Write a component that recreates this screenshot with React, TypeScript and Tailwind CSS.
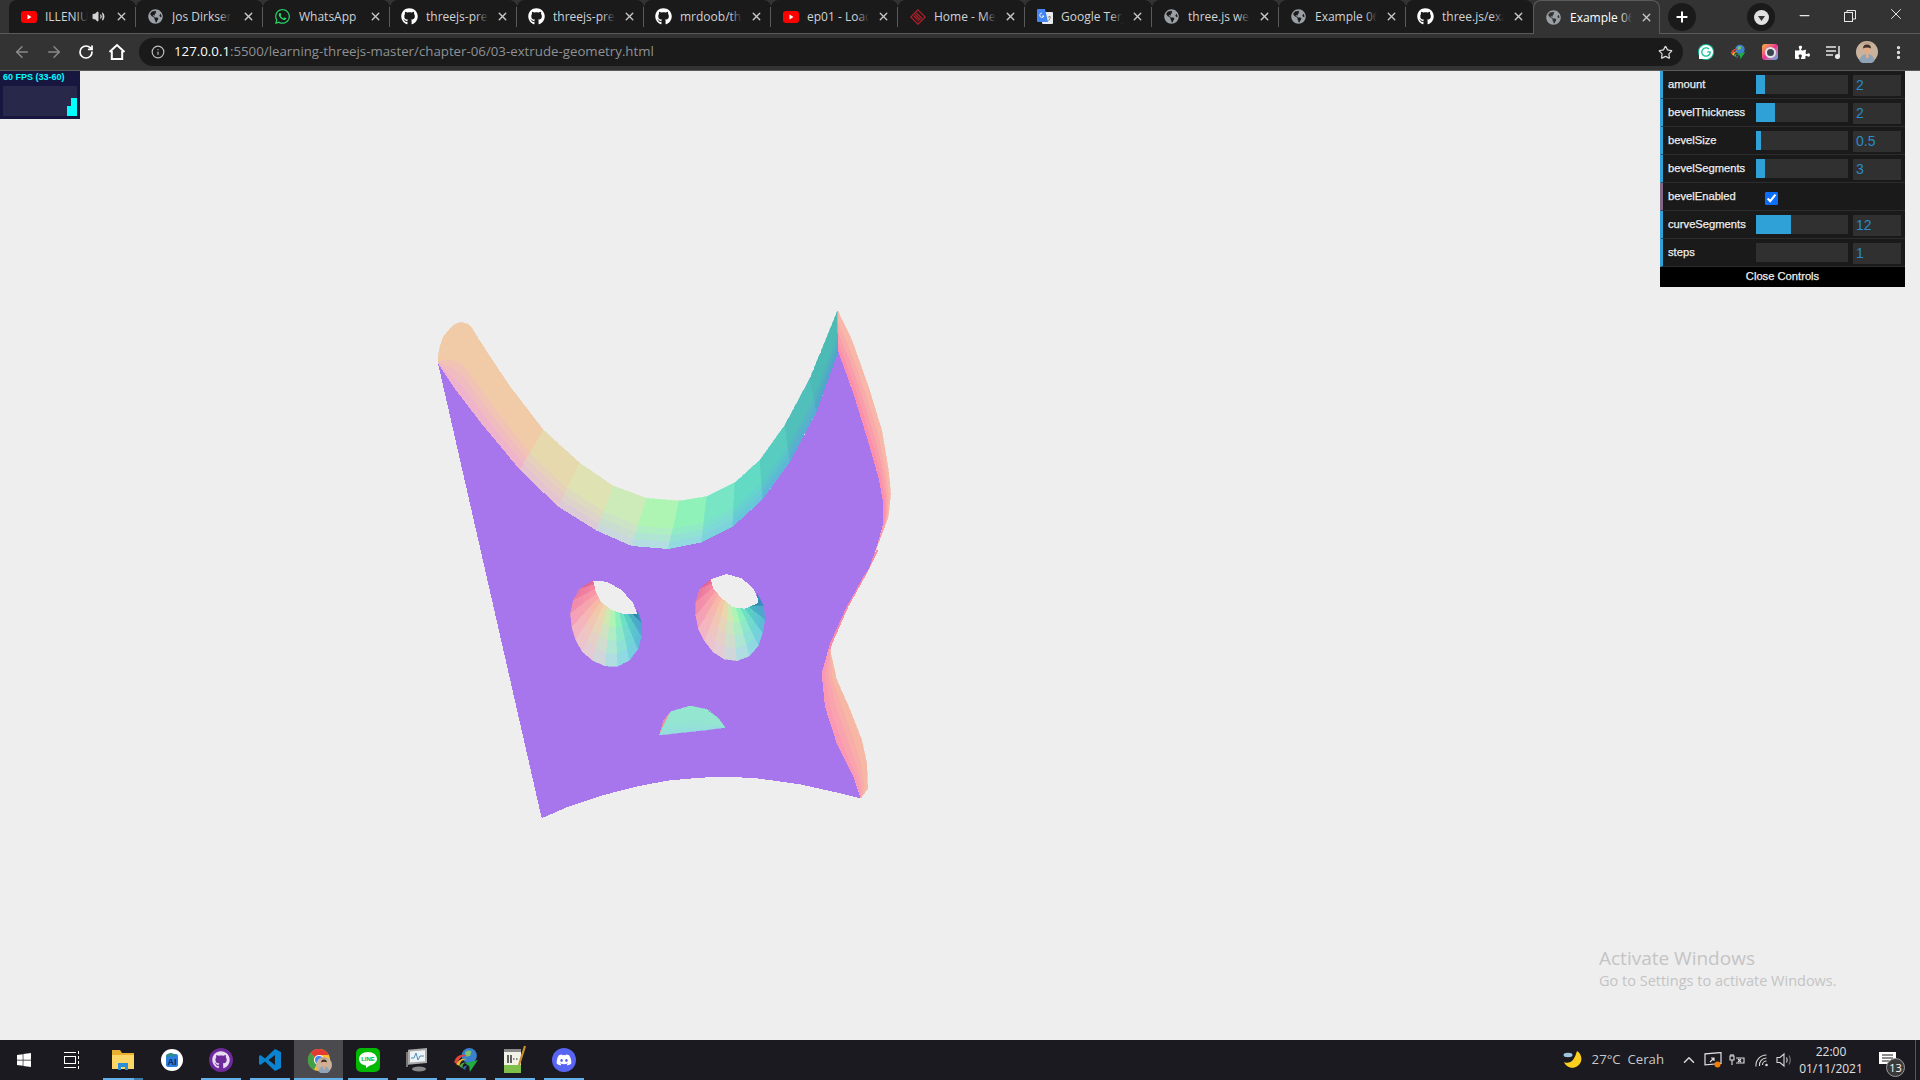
import React from 'react';
import { ArrowLeft, ArrowRight, RotateCw, Star, X, Plus, Minus, Volume2, Info, MoreVertical, ChevronUp } from 'lucide-react';
import { FaGithub, FaWhatsapp, FaGlobeAmericas, FaWindows, FaDiscord, FaPuzzlePiece } from 'react-icons/fa';
import { SiGrammarly } from 'react-icons/si';

type Pt = [number, number];

const uiFont = "font-['Open_Sans','Noto_Sans',sans-serif]";

/* ---------- small drawn icons ---------- */

const YouTubeIcon = () => (
  <svg width="16" height="16" viewBox="0 0 16 16">
    <rect x="0" y="2" width="16" height="12" rx="3" fill="#f00" />
    <path d="M6.5 5.5 L10.5 8 L6.5 10.5 Z" fill="#fff" />
  </svg>
);

const MeetIcon = () => (
  <svg width="16" height="16" viewBox="0 0 16 16" fill="none" stroke="#b3202a" strokeWidth="1.2">
    <path d="M8 0.8 L15.2 8 L8 15.2 L0.8 8 Z" />
    <path d="M5 5.5 L10.5 11 M6.5 4 L12 9.5 M3.8 7 L9 12.2" />
  </svg>
);

const TranslateIcon = () => (
  <svg width="16" height="16" viewBox="0 0 16 16">
    <rect x="5" y="3" width="11" height="12" rx="1" fill="#e8eaed" />
    <path d="M1 0 H8 L11 13 H1 a1 1 0 0 1 -1 -1 V1 a1 1 0 0 1 1 -1Z" fill="#4285f4" />
    <path d="M5 4 a2.2 2.2 0 1 0 2 3 H5" fill="none" stroke="#fff" strokeWidth="0.9" />
    <path d="M11 8 h3 M12.5 7 v1 M11.5 12 L13.5 8.5" fill="none" stroke="#777" strokeWidth="0.8" />
  </svg>
);

const HomeIcon = () => (
  <svg width="18" height="18" viewBox="0 0 18 18" fill="none" stroke="#fff" strokeWidth="2">
    <path d="M1.5 9 L9 2 L16.5 9" />
    <path d="M3.8 8 V16 H14.2 V8" />
  </svg>
);

const Globe = () => <FaGlobeAmericas size={15} color="#9aa0a6" />;
const Git = () => <FaGithub size={17} color="#fff" />;
const Whats = () => <FaWhatsapp size={17} color="#25d366" />;

const Avatar = ({ size }: { size: number }) => (
  <svg width={size} height={size} viewBox="0 0 22 22">
    <circle cx="11" cy="11" r="11" fill="#c9b39c" />
    <path d="M5 3 q6 -3 12 0 q-6 -1 -12 0Z" fill="#b89078" />
    <circle cx="11" cy="8.5" r="3.800" fill="#e0ad8a" />
    <path d="M7 7.500 a4 4 0 0 1 8 0 q-4 -2 -8 0Z" fill="#3f3028" />
    <path d="M3.500 20 q1 -7 7.500 -7 q6.500 0 7.500 7 a11 11 0 0 1 -15 0Z" fill="#8fa3b8" />
    <path d="M10 13 h2.500 v4 h-2.500Z" fill="#e0ad8a" />
  </svg>
);

const IdmGlobe = ({ size }: { size: number }) => (
  <svg width={size} height={size} viewBox="0 0 24 24">
    <circle cx="15" cy="8" r="7" fill="#3a7fd0" />
    <path d="M11 5 q3 -3 6 -1 l-1 4 -4 1Z" fill="#7cc46a" />
    <path d="M1 14 q3 -9 12 -6 q-8 0 -9 8Z" fill="#e0463a" />
    <path d="M3 16 q2 -6 10 -5 q-7 1 -7 6.500Z" fill="#f0b030" />
    <path d="M6 18 q1 -4 7 -4 q-5 1 -4 5.500Z" fill="#4aa84a" />
    <path d="M9 20 q1 -3 5 -3 q-3 1 -2.500 4Z" fill="#3a6fc0" />
    <path d="M23 12 L11 15 L15 17.500 L15.500 23 Z" fill="#1fae3f" />
  </svg>
);

const ChromeIcon = () => (
  <svg width="24" height="24" viewBox="0 0 24 24">
    <circle cx="12" cy="12" r="11" fill="#fbc02d" />
    <path d="M12 1 A11 11 0 0 1 21.800 7 H12 A5 5 0 0 0 7.600 9.500 L3.500 4.800 A11 11 0 0 1 12 1Z" fill="#e53935" />
    <path d="M3.500 4.800 L7.600 9.500 A5 5 0 0 0 9.500 16.300 L7 22 A11 11 0 0 1 3.500 4.800Z" fill="#43a047" />
    <circle cx="12" cy="12" r="5" fill="#fff" />
    <circle cx="12" cy="12" r="4" fill="#4285f4" />
  </svg>
);

const FolderIcon = () => (
  <svg width="24" height="24" viewBox="0 0 24 24">
    <path d="M1 2 H9 L11 5 H23 V21 H1 Z" fill="#e8b030" />
    <rect x="1" y="7" width="22" height="14" fill="#fcd768" />
    <path d="M7 15 H17 V22 H14 V19 H10 V22 H7Z" fill="#2a8fd8" />
  </svg>
);

const AiIcon = () => (
  <svg width="22" height="22" viewBox="0 0 22 22">
    <circle cx="11" cy="11" r="11" fill="#fff" />
    <rect x="5" y="5" width="12" height="13" rx="2" fill="#2b7de0" />
    <path d="M5 8 Q6 4 10 4 Q13 4 14 7Z" fill="#2e8f7f" />
    <text x="11" y="16" textAnchor="middle" fontSize="9" fontWeight="700" fontFamily="Liberation Sans" fill="#12245c">AI</text>
  </svg>
);

const VsCodeIcon = () => (
  <svg width="24" height="24" viewBox="0 0 24 24">
    <path d="M17 1 L23 4 V20 L17 23 L7 13.500 L2.500 17 L1 16 V8 L2.500 7 L7 10.500Z M17 7 L10.500 12 L17 17Z" fill="#0a84d0" fillRule="evenodd" />
  </svg>
);

const LineIcon = () => (
  <svg width="24" height="24" viewBox="0 0 24 24">
    <rect width="24" height="24" rx="5" fill="#00b900" />
    <path d="M12 4 C6.500 4 3 7.300 3 11 C3 14.500 6 17 10 17.500 L10 20 L14 17.500 C18 16.500 21 14 21 11 C21 7.300 17.500 4 12 4Z" fill="#fff" />
    <text x="12" y="13" textAnchor="middle" fontSize="6" fontWeight="700" fontFamily="Liberation Sans" fill="#00b900">LINE</text>
  </svg>
);

const NetworkIcon = () => (
  <svg width="24" height="26" viewBox="0 0 24 26">
    <rect x="3" y="3" width="19" height="15" fill="#aaa" transform="skewY(-5)" />
    <rect x="5" y="5" width="15" height="11" fill="#eef2f5" transform="skewY(-5)" />
    <path d="M6 11 L9 11 L11 6 L13 13 L15 9 L19 9" fill="none" stroke="#4a90c0" />
    <ellipse cx="14" cy="22" rx="7" ry="2.500" fill="#888" />
    <rect x="1" y="5" width="2" height="15" fill="#777" />
  </svg>
);

const NotepadIcon = () => (
  <svg width="24" height="30" viewBox="0 0 24 30">
    <rect x="1" y="4" width="17" height="24" fill="#f2f2e8" />
    <rect x="1" y="20" width="17" height="8" fill="#7fc04c" />
    <rect x="1" y="4" width="17" height="3" fill="#8a8a8a" />
    <path d="M5 10 V18 M8 10 V18" stroke="#222" strokeWidth="1.400" />
    <path d="M10 14 h1.500 M13 14 h1.500" stroke="#222" strokeWidth="1" />
    <path d="M22 1 L16 20" stroke="#c8902a" strokeWidth="2.200" />
  </svg>
);

const MoonIcon = () => (
  <svg width="20" height="20" viewBox="0 0 20 20">
    <path d="M14 1 A9 9 0 1 1 1 12 Q10 16 14 1Z" fill="#fccf1e" />
    <ellipse cx="5" cy="5" rx="4.500" ry="2.200" fill="#9fc4e0" />
  </svg>
);

/* ---------- tab strip ---------- */

interface Tab {
  title: string;
  icon: React.ReactNode;
  textWidth: number;
  sound?: boolean;
  active?: boolean;
}

const tabs: Tab[] = [
  { title: 'ILLENIUM', icon: <YouTubeIcon />, textWidth: 43, sound: true },
  { title: 'Jos Dirksen', icon: <Globe />, textWidth: 59 },
  { title: 'WhatsApp', icon: <Whats />, textWidth: 67 },
  { title: 'threejs-presentation', icon: <Git />, textWidth: 62 },
  { title: 'threejs-presentation', icon: <Git />, textWidth: 62 },
  { title: 'mrdoob/three.js', icon: <Git />, textWidth: 62 },
  { title: 'ep01 - Loading', icon: <YouTubeIcon />, textWidth: 62 },
  { title: 'Home - Meetup', icon: <MeetIcon />, textWidth: 62 },
  { title: 'Google Terjemahan', icon: <TranslateIcon />, textWidth: 62 },
  { title: 'three.js webgl', icon: <Globe />, textWidth: 62 },
  { title: 'Example 06.03', icon: <Globe />, textWidth: 62 },
  { title: 'three.js/examples', icon: <Git />, textWidth: 62 },
  { title: 'Example 06.03', icon: <Globe />, textWidth: 62, active: true },
];

const TabItem = ({ tab, last }: { tab: Tab; last: boolean }) => (
  <div
    className={`relative flex items-center w-[127px] shrink-0 pl-[11px] rounded-t-lg ${
      tab.active ? 'bg-[#333333] h-[34px] border border-b-0 border-[#5b5b5b] z-10' : 'bg-[#1a1a1a] h-[33px]'
    }`}
  >
    <span className="flex items-center justify-center w-[17px] shrink-0">{tab.icon}</span>
    <div className="ml-[8px] overflow-hidden relative" style={{ width: tab.textWidth }}>
      <span className={`block whitespace-nowrap text-[12px] ${tab.active ? 'text-[#ffffff]' : 'text-[#d0d3d6]'}`}>{tab.title}</span>
      <span className={`absolute right-0 top-0 h-full w-3 bg-gradient-to-r from-transparent ${tab.active ? 'to-[#333333]' : 'to-[#1a1a1a]'}`} />
    </div>
    {tab.sound && <Volume2 size={13} className="absolute left-[83px] text-[#d5d5d5] fill-[#d5d5d5]" />}
    <X size={13} strokeWidth={2.5} className="absolute left-[106px] text-[#c8c8c8]" />
    {!tab.active && !last && <span className="absolute right-0 top-[7px] h-[20px] w-px bg-[#5a5a5a]" />}
  </div>
);

const TabStrip = () => (
  <div className="flex h-[34px] bg-[#333333] border-b border-[#5b5b5b] pl-[9px] shrink-0 relative">
    {tabs.map((tab, i) => (
      <TabItem key={i} tab={tab} last={i === 11} />
    ))}
    <div className="ml-[8px] mt-[3px] w-[28px] h-[28px] rounded-full bg-[#1a1a1a] flex items-center justify-center">
      <Plus size={16} strokeWidth={3} className="text-white" />
    </div>
    <div className="ml-[51px] mt-[3px] w-[28px] h-[28px] rounded-full bg-[#1a1a1a] flex items-center justify-center">
      <svg width="15" height="15" viewBox="0 0 15 15">
        <circle cx="7.500" cy="7.500" r="7.500" fill="#e0e0e0" />
        <path d="M4 6 H11 L7.500 11Z" fill="#333" />
      </svg>
    </div>
    <Minus size={15} className="ml-[22px] mt-[8px] text-[#e8e8e8]" />
    <svg width="12" height="12" viewBox="0 0 12 12" fill="none" stroke="#e8e8e8" className="ml-[32px] mt-[10px]">
      <rect x="0.5" y="2.500" width="8" height="9" />
      <path d="M3 2.500 V0.500 H11.500 V9 H8.500" />
    </svg>
    <X size={18} strokeWidth={1.3} className="ml-[31px] mt-[5px] text-[#e8e8e8]" />
  </div>
);

/* ---------- toolbar ---------- */

const Toolbar = () => (
  <div className="flex items-center h-[37px] bg-[#333333] border-b border-[#5b5b5b] shrink-0">
    <ArrowLeft size={18} className="ml-[13px] text-[#8a8a8a]" />
    <ArrowRight size={18} className="ml-[14px] text-[#8a8a8a]" />
    <RotateCw size={16} strokeWidth={2.6} className="ml-[15px] text-white" />
    <span className="ml-[14px] flex"><HomeIcon /></span>
    <div className="ml-[13px] w-[1544px] h-[28px] rounded-full bg-[#1a1a1a] flex items-center relative">
      <Info size={14} className="ml-[12px] text-[#c0c0c0]" />
      <div className={`ml-[9px] text-[13.27px] whitespace-nowrap ${uiFont}`}>
        <span className="text-white">127.0.0.1</span>
        <span className="text-[#8f9194]">:5500/learning-threejs-master/chapter-06/03-extrude-geometry.html</span>
      </div>
      <Star size={15} strokeWidth={2} className="absolute right-[10px] text-[#d8d8d8]" />
    </div>
    <span className="ml-[15px] w-[16px] h-[16px] rounded-full bg-[#15c39a] flex items-center justify-center">
      <SiGrammarly size={14} color="#fff" />
    </span>
    <span className="ml-[16px] flex"><IdmGlobe size={16} /></span>
    <span className="ml-[16px] w-[16px] h-[16px] rounded-[3px] bg-gradient-to-br from-[#f5b013] via-[#e8308c] to-[#20a8e8] flex items-center justify-center">
      <span className="w-[11px] h-[11px] rounded-full border-2 border-[#dfe6ea] bg-[#3d4650]" />
    </span>
    <FaPuzzlePiece size={15} color="#fff" className="ml-[17px]" />
    <svg width="16" height="14" viewBox="0 0 16 14" fill="none" stroke="#e8e8e8" strokeWidth="1.500" className="ml-[16px]">
      <path d="M0 2 H10 M0 6 H10 M0 10 H7 M13 1 V11" />
      <circle cx="11.500" cy="11.500" r="1.800" fill="#e8e8e8" />
    </svg>
    <span className="ml-[14px] flex"><Avatar size={22} /></span>
    <MoreVertical size={17} strokeWidth={2.6} className="ml-[12px] text-[#e8e8e8]" />
  </div>
);

/* ---------- three.js stats + dat.gui overlays ---------- */

const Stats = () => (
  <div className="absolute left-0 top-0 w-[80px] h-[48px] bg-[#16163f] px-[3px] font-['Liberation_Sans',sans-serif]">
    <div className="h-[15px] text-[9px] font-bold leading-[13px] text-[#00ffff] whitespace-nowrap">60 FPS (33-60)</div>
    <div className="w-[74px] h-[30px] bg-[#28284a] flex items-end justify-end">
      <span className="w-[4px] h-[10px] bg-[#00ffff]" />
      <span className="w-[6px] h-[18px] bg-[#00ffff]" />
    </div>
  </div>
);

interface Control {
  label: string;
  value?: string;
  fill?: number;
}

const controls: Control[] = [
  { label: 'amount', value: '2', fill: 9 },
  { label: 'bevelThickness', value: '2', fill: 19 },
  { label: 'bevelSize', value: '0.5', fill: 5 },
  { label: 'bevelSegments', value: '3', fill: 9 },
  { label: 'bevelEnabled' },
  { label: 'curveSegments', value: '12', fill: 35 },
  { label: 'steps', value: '1', fill: 0 },
];

const ControlRow = ({ c }: { c: Control }) => (
  <div
    className={`flex items-start h-[28px] pt-[4px] pl-[5px] bg-[#1a1a1a] border-b border-[#2c2c2c] border-l-[3px] ${
      c.value ? 'border-l-[#2fa1d6]' : 'border-l-[#806787]'
    }`}
  >
    <span className="w-[88px] text-[11.2px] leading-[18px] text-[#eeeeee] [-webkit-text-stroke:0.25px_#eeeeee] [text-shadow:0_-1px_0_#111]">{c.label}</span>
    {c.value ? (
      <>
        <div className="w-[92px] h-[19px] bg-[#303030]">
          <div className="h-full bg-[#2fa1d6]" style={{ width: c.fill }} />
        </div>
        <div className="ml-[5px] w-[48px] h-[21px] bg-[#303030] pl-[3px] text-[14px] leading-[20px] text-[#2a8cc8]">{c.value}</div>
      </>
    ) : (
      <input type="checkbox" checked readOnly className="ml-[9px] mt-[5px] w-[13px] h-[13px] accent-[#0b6dfb]" />
    )}
  </div>
);

const Controls = () => (
  <div className="absolute right-[15px] top-0 w-[245px] font-['Liberation_Sans',sans-serif]">
    {controls.map((c) => (
      <ControlRow key={c.label} c={c} />
    ))}
    <div className="h-[20px] bg-black text-center text-[11.2px] leading-[19px] text-[#eeeeee] [-webkit-text-stroke:0.25px_#eeeeee]">Close Controls</div>
  </div>
);

/* ---------- the extruded shape ---------- */

// coordinates below were read off the crops, z5 and z6 bring them to page pixels
const z5 = (p: Pt): Pt => [p[0] / 3 + 420, p[1] / 3 + 290];
const z6 = (p: Pt): Pt => [p[0] / 3 + 500, p[1] / 3 + 550];

const resample = (pts: Pt[], n: number): Pt[] => {
  const lens = [0];
  for (let i = 1; i < pts.length; i++) {
    lens.push(lens[i - 1] + Math.hypot(pts[i][0] - pts[i - 1][0], pts[i][1] - pts[i - 1][1]));
  }
  const total = lens[lens.length - 1];
  const out: Pt[] = [];
  for (let k = 0; k <= n; k++) {
    const d = (total * k) / n;
    let i = 1;
    while (i < pts.length - 1 && lens[i] < d) i++;
    const t = (d - lens[i - 1]) / (lens[i] - lens[i - 1] || 1);
    out.push([pts[i - 1][0] + (pts[i][0] - pts[i - 1][0]) * t, pts[i - 1][1] + (pts[i][1] - pts[i - 1][1]) * t]);
  }
  return out;
};

const mixHex = (a: string, b: string, t: number) => {
  const ch = (h: string, i: number) => parseInt(h.slice(1 + i * 2, 3 + i * 2), 16);
  const c = [0, 1, 2].map((i) => Math.round(ch(a, i) + (ch(b, i) - ch(a, i)) * t));
  return `rgb(${c[0]},${c[1]},${c[2]})`;
};

const toPoints = (pts: Pt[]) => pts.map((p) => `${p[0].toFixed(1)},${p[1].toFixed(1)}`).join(' ');

const BAND_STOPS = [0, 0.58, 0.72, 0.86, 1];
const EYE_STOPS = [0, 0.3, 0.55, 0.78, 1];
const SIDE_STOPS = [0, 0.3, 0.55, 0.8, 1];

// one facet of the bevel: a few strips that go from the colour of edge o to the colour of edge i
const Ribbon = ({ o, i, a, b, stops = BAND_STOPS }: { o: Pt[]; i: Pt[]; a: string; b: string; stops?: number[] }) => {
  const n = 48;
  const ro = resample(o, n);
  const ri = resample(i, n);
  const at = (t: number) => ro.map((p, k): Pt => [p[0] + (ri[k][0] - p[0]) * t, p[1] + (ri[k][1] - p[1]) * t]);
  return (
    <>
      {stops.slice(0, -1).map((t, k) => {
        const pts = [...at(t), ...at(stops[k + 1]).reverse()];
        const col = mixHex(a, b, k / 3);
        return <polygon key={k} points={toPoints(pts)} fill={col} stroke={col} strokeWidth="0.6" />;
      })}
    </>
  );
};

const topBand: { o: Pt[]; i: Pt[]; a: string; b: string }[] = [
  {
    o: [[54, 205], [58, 178], [70, 140], [100, 105], [125, 96], [150, 106], [200, 185], [270, 290], [370, 420]],
    i: [[54, 220], [100, 290], [180, 395], [300, 540]],
    a: '#f1cba8',
    b: '#efb4cb',
  },
  { o: [[370, 420], [480, 520]], i: [[300, 540], [415, 650]], a: '#e6d9ae', b: '#e6c3d1' },
  { o: [[480, 520], [580, 588]], i: [[415, 650], [530, 722]], a: '#dfe2b3', b: '#dccbd6' },
  { o: [[580, 588], [680, 625]], i: [[530, 722], [635, 768]], a: '#cdeab9', b: '#c9d8dc' },
  { o: [[680, 625], [778, 633]], i: [[635, 768], [745, 777]], a: '#aef5b4', b: '#b2dde2' },
  { o: [[778, 633], [860, 620]], i: [[745, 777], [845, 757]], a: '#8ff2b8', b: '#93dae0' },
  { o: [[860, 620], [945, 578]], i: [[845, 757], [938, 710]], a: '#78e6c4', b: '#7ed2de' },
  { o: [[945, 578], [1020, 510]], i: [[938, 710], [1028, 628]], a: '#63dbc4', b: '#68c6da' },
  { o: [[1020, 510], [1095, 405]], i: [[1028, 628], [1110, 515]], a: '#58cdbf', b: '#5cb8d6' },
  { o: [[1095, 405], [1170, 265]], i: [[1110, 515], [1190, 365]], a: '#52c0ba', b: '#58add2' },
  { o: [[1170, 265], [1253, 62]], i: [[1190, 365], [1255, 185]], a: '#4cbab5', b: '#51a5cc' },
];

const wedgeColors: [string, string][] = [
  ['#e9709a', '#e0608f'], ['#f585a0', '#ea7aa0'], ['#f896a8', '#f08cac'], ['#f8a8a8', '#f3a0b8'],
  ['#f7b8a8', '#f3b4c4'], ['#f2c8a8', '#eec4cc'], ['#e8d8ac', '#e4ccd4'], ['#cfe8b4', '#d0d6da'],
  ['#aef4b4', '#b0dde2'], ['#8af0bc', '#90d9e2'], ['#6fe0c4', '#74cfde'], ['#58cfc4', '#5cbcd8'],
  ['#4ab0c0', '#4ea6d0'], ['#2a88a8', '#3a8cc0'],
];

const Eye = ({ rim, lip, top }: { rim: Pt[]; lip: Pt[]; top: Pt[] }) => {
  const n = wedgeColors.length;
  const r = resample(rim.map(z6), n);
  const l = resample(lip.map(z6), n);
  return (
    <>
      {wedgeColors.map(([a, b], k) => (
        <Ribbon key={k} o={[l[k], l[k + 1]]} i={[r[k], r[k + 1]]} a={a} b={b} stops={EYE_STOPS} />
      ))}
      <polygon points={toPoints([...top, ...[...lip].reverse()].map(z6))} fill="#eeeeee" />
    </>
  );
};

const facePoints: Pt[] = [
  ...([[54, 220], [100, 290], [180, 395], [300, 540], [415, 650], [530, 722], [635, 768], [745, 777], [845, 757], [938, 710], [1028, 628], [1110, 515], [1190, 365], [1255, 185], [1300, 310], [1340, 440], [1375, 560], [1390, 640], [1390, 700], [1370, 770], [1345, 840]] as Pt[]).map(z5),
  ...([[1090, 80], [1040, 170], [990, 280], [965, 370], [975, 470], [1010, 580], [1060, 680], [1082, 745], [1000, 725], [900, 703], [770, 685], [680, 680], [600, 683], [500, 692], [400, 712], [300, 738], [200, 772], [125, 805]] as Pt[]).map(z6),
];

const Shape = () => (
  <svg width="500" height="560" viewBox="420 290 500 560" shapeRendering="crispEdges" className="absolute left-[420px] top-[219px]">
    {topBand.map((s, k) => (
      <Ribbon key={k} o={s.o.map(z5)} i={s.i.map(z5)} a={s.a} b={s.b} />
    ))}
    <Ribbon
      o={([[1253, 62], [1295, 150], [1345, 290], [1385, 420], [1405, 540], [1412, 610], [1405, 680], [1390, 720], [1370, 770], [1345, 840]] as Pt[]).map(z5)}
      i={([[1255, 185], [1300, 310], [1340, 440], [1375, 560], [1390, 640], [1390, 700], [1380, 740], [1370, 770], [1355, 810], [1345, 840]] as Pt[]).map(z5)}
      a="#f8b8a8"
      b="#fb8fad"
      stops={SIDE_STOPS}
    />
    <Ribbon
      o={([[990, 300], [1010, 390], [1050, 480], [1085, 570], [1100, 640], [1103, 715], [1082, 745]] as Pt[]).map(z6)}
      i={([[990, 280], [965, 370], [975, 470], [1010, 580], [1060, 680], [1075, 720], [1082, 745]] as Pt[]).map(z6)}
      a="#f6b8a4"
      b="#fb98b4"
      stops={SIDE_STOPS}
    />
    <polygon points={toPoints(([[1130, 0], [1136, 0], [1095, 80], [1045, 170], [995, 285], [990, 300], [985, 290], [1040, 170], [1090, 80]] as Pt[]).map(z6))} fill="#f98aa8" />
    <polygon points={toPoints(facePoints)} fill="#a776ec" />

    <Eye
      rim={[[275, 95], [240, 115], [215, 160], [210, 205], [222, 260], [250, 310], [290, 340], [340, 355], [385, 335], [415, 295], [428, 245], [420, 190], [412, 180]]}
      lip={[[280, 92], [287, 125], [305, 158], [335, 180], [370, 192], [412, 192]]}
      top={[[280, 92], [320, 95], [365, 120], [400, 160], [412, 192]]}
    />
    <Eye
      rim={[[630, 90], [600, 115], [585, 165], [590, 225], [620, 285], [655, 322], [700, 335], [745, 322], [780, 280], [795, 215], [790, 165], [772, 130]]}
      lip={[[632, 88], [640, 115], [665, 145], [700, 172], [735, 176], [772, 160]]}
      top={[[632, 88], [680, 72], [725, 85], [760, 115], [775, 150], [772, 160]]}
    />

    <polygon points={toPoints(([[478, 555], [490, 510], [512, 485], [500, 520]] as Pt[]).map(z6))} fill="#ef8fa5" />
    <Ribbon
      o={([[512, 485], [570, 468], [620, 478], [655, 505], [675, 532]] as Pt[]).map(z6)}
      i={([[478, 555], [530, 549], [580, 544], [630, 538], [675, 532]] as Pt[]).map(z6)}
      a="#94e6d0"
      b="#94dfdc"
    />
  </svg>
);

/* ---------- taskbar ---------- */

const running: { icon: React.ReactNode; on: boolean; active?: boolean }[] = [
  { icon: <FolderIcon />, on: true },
  { icon: <AiIcon />, on: false },
  {
    icon: (
      <span className="w-[24px] h-[24px] rounded-full bg-[#6e2a9a] flex items-center justify-center">
        <FaGithub size={18} color="#e8dcf0" />
      </span>
    ),
    on: true,
  },
  { icon: <VsCodeIcon />, on: true },
  {
    icon: (
      <span className="relative flex">
        <ChromeIcon />
        <span className="absolute left-[9px] top-[9px] flex"><Avatar size={16} /></span>
      </span>
    ),
    on: true,
    active: true,
  },
  { icon: <LineIcon />, on: true },
  { icon: <NetworkIcon />, on: true },
  { icon: <IdmGlobe size={26} />, on: true },
  { icon: <NotepadIcon />, on: true },
  {
    icon: (
      <span className="w-[24px] h-[24px] rounded-full bg-[#5865f2] flex items-center justify-center">
        <FaDiscord size={16} color="#fff" />
      </span>
    ),
    on: true,
  },
];

const Taskbar = () => (
  <div className={`flex items-center h-[40px] bg-[#1b1a21] shrink-0 text-[#d8d8d8] ${uiFont}`}>
    <div className="w-[48px] flex justify-center"><FaWindows size={16} color="#fff" /></div>
    <div className="w-[48px] flex justify-center">
      <svg width="16" height="18" viewBox="0 0 16 18" fill="none" stroke="#fff">
        <rect x="0.500" y="5.500" width="11" height="7" />
        <path d="M0 1.500 H12 M0 16.500 H12 M14.500 0 V3 M14.500 5 V8 M14.500 10 V13 M14.500 15 V18" />
      </svg>
    </div>
    <div className="flex ml-[2px] h-full">
      {running.map((r, i) => (
        <div key={i} className={`relative w-[49px] h-full flex items-center justify-center ${r.active ? 'bg-[#4b4a4f]' : ''}`}>
          {r.icon}
          {r.on && <span className={`absolute bottom-0 h-[2px] bg-[#63b0ea] ${r.active ? 'left-0 right-0' : 'left-[5px] right-[4px]'}`} />}
          {i === 0 && <span className="absolute bottom-0 right-[4px] w-[9px] h-[2px] bg-[#3c7aa8]" />}
        </div>
      ))}
    </div>
    <div className="ml-auto flex items-center h-full relative">
      <MoonIcon />
      <span className="ml-[9px] text-[13.2px] text-[#c8c8c8] whitespace-nowrap">27°C&nbsp; Cerah</span>
      <ChevronUp size={18} className="ml-[16px] text-[#d8d8d8]" />
      <svg width="18" height="16" viewBox="0 0 18 16" fill="none" stroke="#e0e0e0" strokeWidth="1.200" className="ml-[6px]">
        <rect x="1" y="2" width="16" height="11" transform="skewY(-5)" />
        <path d="M6 10 L10 6 M7 6 H10 V9" />
        <circle cx="13.500" cy="12.500" r="3" fill="#f57c00" stroke="none" />
      </svg>
      <svg width="16" height="14" viewBox="0 0 16 14" fill="none" stroke="#e0e0e0" strokeWidth="1.100" className="ml-[7px]">
        <path d="M1 3 H5 V7 H1Z M2 1 V3 M4 1 V3 M3 7 V12 M7 5 H15 V10 H7" />
        <path d="M9 6 L12 9 M12 6 L9 9" />
      </svg>
      <svg width="16" height="16" viewBox="0 0 16 16" fill="none" stroke="#d8d8d8" strokeWidth="1.100" className="ml-[9px]">
        <circle cx="12.500" cy="13" r="1.300" fill="#d8d8d8" stroke="none" />
        <path d="M8.500 13 A4 4 0 0 1 12.500 9 M5.500 14 A7 7 0 0 1 12.500 6 M2 14.500 A10.500 10.500 0 0 1 12.500 3" />
      </svg>
      <svg width="17" height="16" viewBox="0 0 17 16" fill="none" stroke="#d8d8d8" strokeWidth="1.100" className="ml-[6px]">
        <path d="M1 5.500 H4 L8 2 V14 L4 10.500 H1Z" />
        <path d="M10.500 5.500 Q12 8 10.500 10.500" />
        <path d="M13 3.500 Q15.500 8 13 12.500" stroke="#777" />
      </svg>
      <div className="w-[76px] text-center text-[12px] leading-[17px] text-[#e0e0e0]">
        <div>22:00</div>
        <div>01/11/2021</div>
      </div>
      <div className="relative ml-[8px] w-[34px] h-[28px]">
        <svg width="17" height="14" viewBox="0 0 17 14" className="absolute left-[2px] top-[6px]">
          <path d="M0 0 H17 V12 H0Z" fill="#fff" />
          <path d="M3 3 H14 M3 6 H14 M3 9 H10" stroke="#1b1a21" strokeWidth="1" />
        </svg>
        <span className="absolute left-[9px] top-[12px] w-[19px] h-[19px] rounded-full bg-[#3a3a3a] border border-[#999] text-center text-[11px] leading-[17px] text-white">13</span>
      </div>
      <span className="ml-[4px] mr-[4px] w-px h-full bg-[#55555a]" />
    </div>
  </div>
);

const ActivateWatermark = () => (
  <div className={`absolute left-[1599px] top-[874px] text-[#c4c4c4] ${uiFont}`}>
    <div className="text-[19px] leading-[26px]">Activate Windows</div>
    <div className="text-[14.5px] leading-[20px]">Go to Settings to activate Windows.</div>
  </div>
);

const App: React.FC = () => {
  return (
    <div className={`flex flex-col w-[1920px] h-[1080px] overflow-hidden ${uiFont}`}>
      <TabStrip />
      <Toolbar />
      <div className="relative flex-1 bg-[#eeeeee]">
        <Shape />
        <Stats />
        <Controls />
        <ActivateWatermark />
      </div>
      <Taskbar />
    </div>
  );
};

export default App;
